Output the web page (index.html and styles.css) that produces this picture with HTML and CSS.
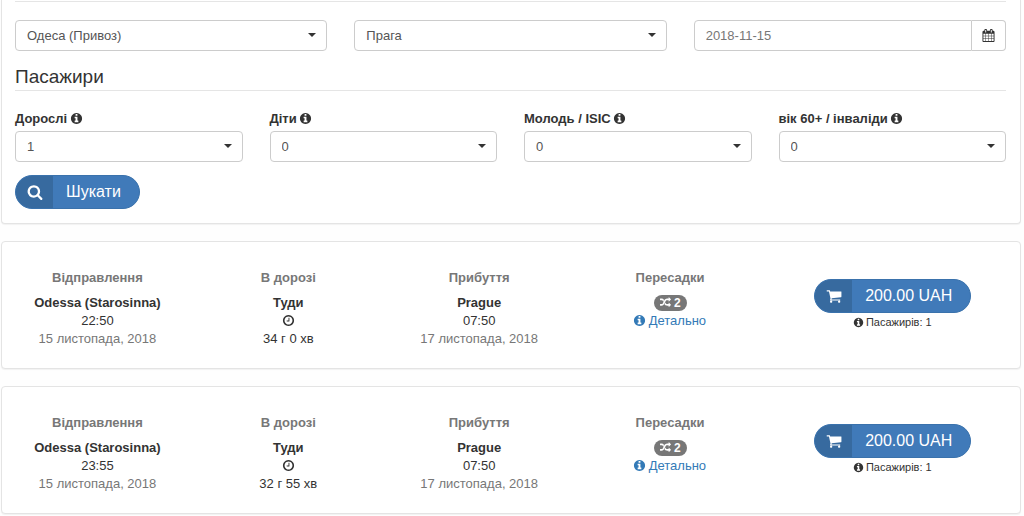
FILE: index.html
```html
<!DOCTYPE html>
<html lang="uk">
<head>
  <meta charset="UTF-8">
  <meta name="viewport" content="width=device-width, initial-scale=1.0">
  <title>Пошук квитків</title>
  <link rel="stylesheet" href="styles.css">
</head>
<body>
  <!-- іконки -->
  <svg class="sprite" aria-hidden="true">
    <symbol id="icon-info" viewBox="0 0 1792 1792"><path d="M1152 1376v-160q0-14-9-23t-23-9h-96v-512q0-14-9-23t-23-9h-320q-14 0-23 9t-9 23v160q0 14 9 23t23 9h96v320h-96q-14 0-23 9t-9 23v160q0 14 9 23t23 9h448q14 0 23-9t9-23zm-128-896v-160q0-14-9-23t-23-9h-192q-14 0-23 9t-9 23v160q0 14 9 23t23 9h192q14 0 23-9t9-23zm640 416q0 209-103 385.5t-279.5 279.5-385.5 103-385.5-103-279.5-279.5-103-385.5 103-385.5 279.5-279.5 385.5-103 385.5 103 279.5 279.5 103 385.5z"/></symbol>
    <symbol id="icon-search" viewBox="0 0 1792 1792"><path d="M1216 832q0-185-131.5-316.5t-316.5-131.5-316.5 131.5-131.5 316.5 131.5 316.5 316.5 131.5 316.5-131.5 131.5-316.5zm512 832q0 52-38 90t-90 38q-54 0-90-38l-343-342q-179 124-399 124-143 0-273.5-55.5t-225-150-150-225-55.5-273.5 55.5-273.5 150-225 225-150 273.5-55.5 273.5 55.5 225 150 150 225 55.5 273.5q0 220-124 399l343 343q37 37 37 90z"/></symbol>
    <symbol id="icon-cart" viewBox="0 0 1792 1792"><path d="M704 1536q0 52-38 90t-90 38-90-38-38-90 38-90 90-38 90 38 38 90zm896 0q0 52-38 90t-90 38-90-38-38-90 38-90 90-38 90 38 38 90zm128-1088v512q0 24-16.5 42.5t-40.5 21.5l-1044 122q13 60 13 70 0 16-24 64h920q26 0 45 19t19 45-19 45-45 19h-1024q-26 0-45-19t-19-45q0-11 8-31.5t16-36 21.5-40 15.5-29.5l-177-823h-204q-26 0-45-19t-19-45 19-45 45-19h256q16 0 28.5 6.5t19.5 15.5 13 24.5 8 26 5.5 29.5 4.5 26h1201q26 0 45 19t19 45z"/></symbol>
    <symbol id="icon-clock" viewBox="0 0 1792 1792"><path d="M1024 544v448q0 14-9 23t-23 9h-320q-14 0-23-9t-9-23v-64q0-14 9-23t23-9h224v-352q0-14 9-23t23-9h64q14 0 23 9t9 23zm416 352q0-148-73-273t-198-198-273-73-273 73-198 198-73 273 73 273 198 198 273 73 273-73 198-198 73-273zm224 0q0 209-103 385.5t-279.5 279.5-385.5 103-385.5-103-279.5-279.5-103-385.5 103-385.5 279.5-279.5 385.5-103 385.5 103 279.5 279.5 103 385.5z"/></symbol>
    <symbol id="icon-calendar" viewBox="0 0 1792 1792"><path d="M192 1664h288v-288h-288v288zm352 0h320v-288h-320v288zm-352-352h288v-320h-288v320zm352 0h320v-320h-320v320zm-352-384h288v-288h-288v288zm736 736h320v-288h-320v288zm-384-736h320v-288h-320v288zm768 736h288v-288h-288v288zm-384-352h320v-320h-320v320zm-352-864v-288q0-13-9.5-22.5t-22.5-9.5h-64q-13 0-22.5 9.5t-9.5 22.5v288q0 13 9.5 22.5t22.5 9.5h64q13 0 22.5-9.5t9.5-22.5zm736 864h288v-320h-288v320zm-384-384h320v-288h-320v288zm384 0h288v-288h-288v288zm32-480v-288q0-13-9.5-22.5t-22.5-9.5h-64q-13 0-22.5 9.5t-9.5 22.5v288q0 13 9.5 22.5t22.5 9.5h64q13 0 22.5-9.5t9.5-22.5zm384-64v1280q0 52-38 90t-90 38h-1408q-52 0-90-38t-38-90v-1280q0-52 38-90t90-38h128v-96q0-66 47-113t113-47h64q66 0 113 47t47 113v96h384v-96q0-66 47-113t113-47h64q66 0 113 47t47 113v96h128q52 0 90 38t38 90z"/></symbol>
    <symbol id="icon-random" viewBox="0 0 1792 1792"><path d="M666 481q-60 92-137 273-22-45-37-72.5t-40.5-63.5-51-56.5-63-35-81.5-14.5h-224q-14 0-23-9t-9-23v-192q0-14 9-23t23-9h224q250 0 410 225zm1126 799q0 14-9 23l-320 320q-9 9-23 9-13 0-22.5-9.5t-9.5-22.5v-192q-32 0-85 .5t-81 1-73-1-71-5-64-10.5-63-18.5-58-28.5-59-40-55-53.5-56-69.5q59-93 136-273 22 45 37 72.5t40.5 63.5 51 56.5 63 35 81.5 14.5h256v-192q0-14 9-23t23-9q12 0 24 10l319 319q9 9 9 23zm0-896q0 14-9 23l-320 320q-9 9-23 9-13 0-22.5-9.5t-9.5-22.5v-192h-256q-48 0-87 15t-69 45-51 61.5-45 77.5q-32 62-78 171-29 66-49.5 111t-54 105-64 100-74 83-90 68.5-106.5 42-128 16.5h-224q-14 0-23-9t-9-23v-192q0-14 9-23t23-9h224q48 0 87-15t69-45 51-61.5 45-77.5q32-62 78-171 29-66 49.5-111t54-105 64-100 74-83 90-68.5 106.5-42 128-16.5h256v-192q0-14 9-23t23-9q12 0 24 10l319 319q9 9 9 23z"/></symbol>
  </svg>

  <!-- форма пошуку -->
  <form class="panel search">
    <div class="route">
      <div class="select">
        <select class="control" name="from" aria-label="Звідки">
          <option>Одеса (Привоз)</option>
        </select>
      </div>
      <div class="select">
        <select class="control" name="to" aria-label="Куди">
          <option>Прага</option>
        </select>
      </div>
      <div class="date">
        <input class="control" type="text" name="date" value="2018-11-15" aria-label="Дата">
        <button class="date-button" type="button" aria-label="Календар"><svg class="icon"><use href="#icon-calendar"/></svg></button>
      </div>
    </div>

    <h2 class="legend">Пасажири</h2>

    <div class="passengers">
      <div class="field">
        <label for="adults">Дорослі <svg class="icon"><use href="#icon-info"/></svg></label>
        <div class="select">
          <select class="control" id="adults"><option>1</option></select>
        </div>
      </div>
      <div class="field">
        <label for="children">Діти <svg class="icon"><use href="#icon-info"/></svg></label>
        <div class="select">
          <select class="control" id="children"><option>0</option></select>
        </div>
      </div>
      <div class="field">
        <label for="youth">Молодь / ISIC <svg class="icon"><use href="#icon-info"/></svg></label>
        <div class="select">
          <select class="control" id="youth"><option>0</option></select>
        </div>
      </div>
      <div class="field">
        <label for="seniors">вік 60+ / інваліди <svg class="icon"><use href="#icon-info"/></svg></label>
        <div class="select">
          <select class="control" id="seniors"><option>0</option></select>
        </div>
      </div>
    </div>

    <button class="btn" type="submit">
      <span class="btn-icon"><svg class="icon"><use href="#icon-search"/></svg></span>
      <span class="btn-text">Шукати</span>
    </button>
  </form>

  <!-- результати -->
  <div class="panel trip">
    <div class="col">
      <h3>Відправлення</h3>
      <strong>Odessa (Starosinna)</strong>
      <span>22:50</span>
      <span class="muted">15 листопада, 2018</span>
    </div>
    <div class="col">
      <h3>В дорозі</h3>
      <strong>Туди</strong>
      <span><svg class="icon"><use href="#icon-clock"/></svg></span>
      <span>34 г 0 хв</span>
    </div>
    <div class="col">
      <h3>Прибуття</h3>
      <strong>Prague</strong>
      <span>07:50</span>
      <span class="muted">17 листопада, 2018</span>
    </div>
    <div class="col">
      <h3>Пересадки</h3>
      <span class="badge"><svg class="icon"><use href="#icon-random"/></svg> 2</span>
      <a href="#"><svg class="icon"><use href="#icon-info"/></svg> Детально</a>
    </div>
    <div class="col buy">
      <button class="btn" type="button">
        <span class="btn-icon"><svg class="icon"><use href="#icon-cart"/></svg></span>
        <span class="btn-text">200.00 UAH</span>
      </button>
      <small><svg class="icon"><use href="#icon-info"/></svg> Пасажирів: 1</small>
    </div>
  </div>

  <div class="panel trip">
    <div class="col">
      <h3>Відправлення</h3>
      <strong>Odessa (Starosinna)</strong>
      <span>23:55</span>
      <span class="muted">15 листопада, 2018</span>
    </div>
    <div class="col">
      <h3>В дорозі</h3>
      <strong>Туди</strong>
      <span><svg class="icon"><use href="#icon-clock"/></svg></span>
      <span>32 г 55 хв</span>
    </div>
    <div class="col">
      <h3>Прибуття</h3>
      <strong>Prague</strong>
      <span>07:50</span>
      <span class="muted">17 листопада, 2018</span>
    </div>
    <div class="col">
      <h3>Пересадки</h3>
      <span class="badge"><svg class="icon"><use href="#icon-random"/></svg> 2</span>
      <a href="#"><svg class="icon"><use href="#icon-info"/></svg> Детально</a>
    </div>
    <div class="col buy">
      <button class="btn" type="button">
        <span class="btn-icon"><svg class="icon"><use href="#icon-cart"/></svg></span>
        <span class="btn-text">200.00 UAH</span>
      </button>
      <small><svg class="icon"><use href="#icon-info"/></svg> Пасажирів: 1</small>
    </div>
  </div>
</body>
</html>
```

FILE: styles.css
```css
* {
  box-sizing: border-box;
}
body {
  margin: 0;
  padding: 0 3px 0 1px;
  background-color: #fefefe;
  color: #333;
  font-family: "Liberation Sans", Arial, sans-serif;
  font-size: 13px;
  line-height: 18px;
}
.sprite {
  display: none;
}
.icon {
  width: 13px;
  height: 13px;
  margin: 0 -1px;
  fill: currentColor;
  vertical-align: -2px;
}
.panel {
  margin-bottom: 17px;
  background-color: white;
  border: 1px solid #e4e4e4;
  border-radius: 4px;
  box-shadow: 0 1px 1px rgba(0, 0, 0, 0.05);
}

/* форма пошуку */
.search {
  padding: 1px 14px 14px 13px;
  border-top: none;
  border-radius: 0 0 4px 4px;
}
.route {
  display: grid;
  grid-template-columns: repeat(3, 1fr);
  gap: 27px;
  padding-top: 18px;
  border-top: 1px solid #e5e5e5;
}
.select {
  position: relative;
}
.select::after {
  content: "";
  position: absolute;
  top: 13px;
  right: 11px;
  border: 4px solid transparent;
  border-top-color: #333;
  border-bottom: none;
  pointer-events: none;
}
.control {
  display: block;
  width: 100%;
  height: 31px;
  padding: 0 11px;
  border: 1px solid #ccc;
  border-radius: 4px;
  background-color: white;
  color: #555;
  font: inherit;
  appearance: none;
}
.date {
  display: flex;
}
.date .control {
  flex: 1;
  min-width: 0;
  border-radius: 4px 0 0 4px;
  color: #777;
}
.date-button {
  width: 34px;
  padding: 0;
  border: 1px solid #ccc;
  border-left: none;
  border-radius: 0 4px 4px 0;
  background-color: white;
  color: #333;
}
.legend {
  margin: 13px 0 19px;
  padding-bottom: 1px;
  border-bottom: 1px solid #e5e5e5;
  font-size: 19px;
  font-weight: normal;
  line-height: 25px;
}
.passengers {
  display: grid;
  grid-template-columns: repeat(4, 1fr);
  gap: 27px;
  margin-bottom: 13px;
}
.field label {
  display: block;
  margin-bottom: 3px;
  font-weight: bold;
}

/* кнопки */
.btn {
  display: inline-flex;
  height: 34px;
  padding: 0;
  overflow: hidden;
  border: 1px solid #3a72ac;
  border-radius: 17px;
  background-color: #407ab9;
  color: white;
  font-family: inherit;
  font-size: 16px;
  line-height: 32px;
  cursor: pointer;
}
.btn-icon {
  display: flex;
  align-items: center;
  justify-content: center;
  width: 37px;
  background-color: #376a9f;
}
.btn-icon .icon {
  width: 16px;
  height: 16px;
}
.btn-text {
  padding: 0 18px 0 13px;
}

/* результати */
.trip {
  display: flex;
  padding: 27px 0 20px;
}
.col {
  display: flex;
  flex: 3;
  flex-direction: column;
  align-items: center;
}
.col h3 {
  margin: 0 0 7px;
  color: #777;
  font-size: 13px;
  line-height: 18px;
}
.muted {
  color: #777;
}
.badge {
  margin: 1px 0;
  padding: 0 6px;
  border-radius: 9px;
  background-color: #777;
  color: white;
  font-size: 12px;
  font-weight: bold;
  line-height: 16px;
}
.badge .icon {
  width: 11px;
  height: 11px;
  margin: 0;
  vertical-align: -1px;
}
.col a {
  color: #337ab7;
  text-decoration: none;
}
.buy {
  flex: 4;
  padding-top: 10px;
}
.buy small {
  font-size: 11px;
}
.buy small .icon {
  width: 11px;
  height: 11px;
}
```
